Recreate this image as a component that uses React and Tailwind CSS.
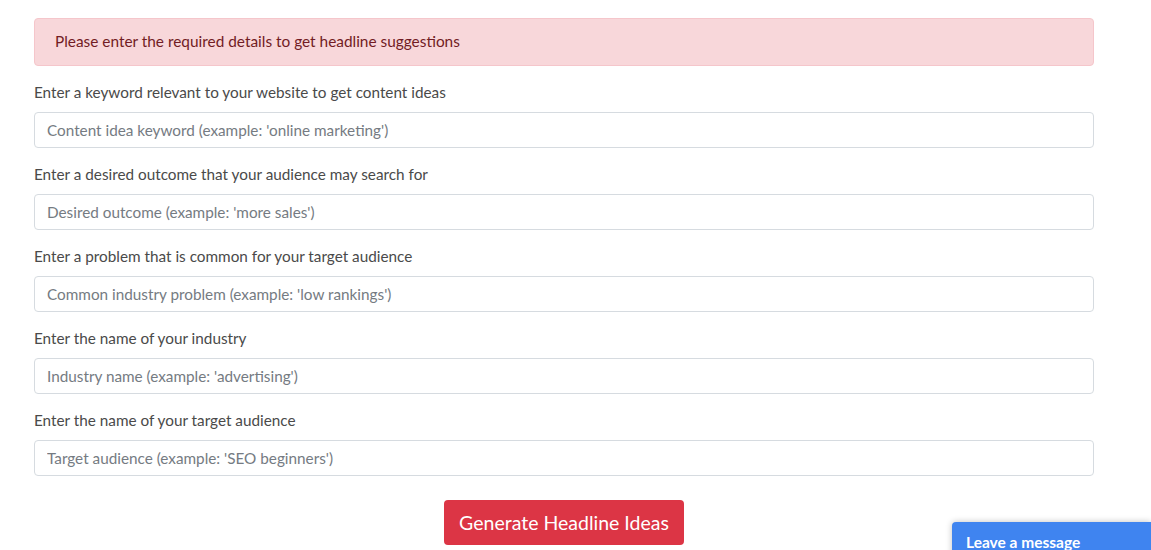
const fields = [
  { label: 'Enter a keyword relevant to your website to get content ideas', placeholder: "Content idea keyword (example: 'online marketing')" },
  { label: 'Enter a desired outcome that your audience may search for', placeholder: "Desired outcome (example: 'more sales')" },
  { label: 'Enter a problem that is common for your target audience', placeholder: "Common industry problem (example: 'low rankings')" },
  { label: 'Enter the name of your industry', placeholder: "Industry name (example: 'advertising')" },
  { label: 'Enter the name of your target audience', placeholder: "Target audience (example: 'SEO beginners')" },
]

export default function App() {
  return (
    <div className="relative w-[1151px] h-[550px] overflow-hidden bg-white font-['Lato',sans-serif]">
      <div className="w-[1060px] ml-[34px] pt-[18px]">
        <div className="h-[48px] flex items-center pb-[1px] px-[20px] rounded-[4px] bg-[#f8d7da] border border-[#f5c6cb] text-[#721c24] text-[15.4px]">
          Please enter the required details to get headline suggestions
        </div>
        <div className="flex flex-col gap-4 mt-[16px]">
          {fields.map((f) => (
            <div key={f.label} className="flex flex-col">
              <label className="h-5 leading-5 text-[15.3px] text-[#4a4a4a]">{f.label}</label>
              <input
                className="mt-[10px] h-[36px] px-3 rounded-[4px] border border-[#d6dbe0] text-[15.3px] placeholder:text-[#757b82] outline-none"
                placeholder={f.placeholder}
              />
            </div>
          ))}
        </div>
        <div className="flex justify-center mt-6">
          <button className="w-[240px] h-[45px] rounded-[4px] bg-[#dc3545] text-white text-[19.5px]">
            Generate Headline Ideas
          </button>
        </div>
      </div>
      <div className="absolute left-[952px] top-[522px] w-[199px] h-[40px] rounded-tl-[4px] bg-[#3f84f0] shadow-[0_0_6px_rgba(0,0,0,0.25)] px-[14px] pt-[9px] text-white text-[15.5px] font-bold">
        Leave a message
      </div>
    </div>
  )
}
